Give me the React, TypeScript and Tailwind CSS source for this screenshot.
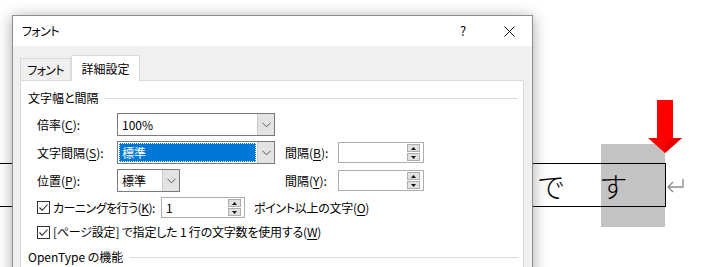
import React from "react";

const FONT = "font-['Noto_Sans_CJK_JP',sans-serif] [font-feature-settings:'palt']";

function U({ c }: { c: string }) {
  return <span className="underline underline-offset-2 decoration-1">{c}</span>;
}

function Chevron() {
  return (
    <svg width="9" height="6" viewBox="0 0 9 6">
      <polyline points="0.5,0.8 4.5,4.8 8.5,0.8" fill="none" stroke="#555" strokeWidth="1" />
    </svg>
  );
}

function Combo({ w, text, selected }: { w: string; text: string; selected?: boolean }) {
  return (
    <div className={`flex h-[23px] border border-[#7a7a7a] bg-white ${w}`}>
      <div className="flex-1 flex items-center p-[1px]">
        {selected ? (
          <div className="h-full w-full bg-[#0078d7] outline-1 outline-dotted outline-[#ffffff] -outline-offset-1 flex items-center pl-[3px] text-white">
            {text}
          </div>
        ) : (
          <span className="pl-[3px]">{text}</span>
        )}
      </div>
      <div className="w-[17px] bg-[#e3e3e3] border-l border-[#cccccc] flex items-center justify-center">
        <Chevron />
      </div>
    </div>
  );
}

function SpinBtn({ up }: { up?: boolean }) {
  return (
    <div className="h-[8px] w-[13px] bg-[#e1e1e1] border border-[#adadad] flex items-center justify-center">
      <svg width="5" height="3" viewBox="0 0 5 3">
        {up ? <polygon points="0,3 5,3 2.5,0" fill="#111" /> : <polygon points="0,0 5,0 2.5,3" fill="#111" />}
      </svg>
    </div>
  );
}

function Spin({ w, text }: { w: string; text?: string }) {
  return (
    <div className={`flex h-[21px] border border-[#adadad] bg-white ${w}`}>
      <div className="flex-1 flex items-center pl-[4px]">{text}</div>
      <div className="flex flex-col justify-center gap-[1px] pr-[3px]">
        <SpinBtn up />
        <SpinBtn />
      </div>
    </div>
  );
}

function Check() {
  return (
    <div className="w-[13px] h-[13px] border border-[#333333] bg-white flex items-center justify-center shrink-0">
      <svg width="11" height="11" viewBox="0 0 11 11">
        <polyline points="1.5,5.5 4.2,8.3 9.5,2.5" fill="none" stroke="#222" strokeWidth="1.1" />
      </svg>
    </div>
  );
}

export default function App() {
  return (
    <div className={`relative w-[716px] h-[267px] bg-white overflow-hidden text-[12px] leading-[16px] text-black ${FONT}`}>
      {/* Document behind the dialog */}
      <div className="absolute left-[601px] top-[144px] w-[64px] h-[83px] bg-[#c3c3c3]" />
      <div className="absolute left-[-20px] top-[163px] w-[686px] h-[44px] border border-black" />
      <span className="absolute left-[538px] top-[171px] text-[28px] leading-[30px] font-light">で</span>
      <span className="absolute left-[601px] top-[171px] text-[28px] leading-[30px] font-light">す</span>
      <svg className="absolute left-[666px] top-[177px]" width="20" height="18" viewBox="0 0 20 18">
        <polyline points="17,2 17,10 2,10" fill="none" stroke="#8a8a8a" strokeWidth="1.3" />
        <polyline points="7,5 2,10 7,15" fill="none" stroke="#8a8a8a" strokeWidth="1.3" />
      </svg>
      <svg className="absolute left-[647px] top-[99px]" width="36" height="56" viewBox="0 0 36 56">
        <polygon points="10,1 26,1 26,39 35,39 18,54 1,39 10,39" fill="#ff0000" />
        <polygon points="18,54 26,47 35,39 26,39 18,47" fill="#d40000" opacity="0.6" />
      </svg>

      {/* Dialog */}
      <div className="absolute left-[12px] top-[15px] w-[521px] h-[290px] border border-[#8e8e8e] bg-[#f0f0f0] shadow-[0_2px_14px_rgba(0,0,0,0.35)] flex flex-col">
        <div className="h-[30px] bg-white flex items-center shrink-0">
          <span className="pl-[9px] tracking-[-0.6px]">フォント</span>
          <div className="ml-auto w-[46px] h-full flex items-center justify-center text-[13px]">?</div>
          <div className="w-[46px] h-full flex items-center justify-center">
            <svg width="11" height="11" viewBox="0 0 11 11">
              <line x1="0.5" y1="0.5" x2="10.5" y2="10.5" stroke="#111" strokeWidth="1" />
              <line x1="10.5" y1="0.5" x2="0.5" y2="10.5" stroke="#111" strokeWidth="1" />
            </svg>
          </div>
        </div>

        <div className="flex items-end pl-[7px] pt-[8px] h-[34px] shrink-0">
          <div className="w-[51px] h-[22px] border border-b-0 border-[#d9d9d9] flex items-center justify-center tracking-[-0.6px]">フォント</div>
          <div className="relative z-10 -mb-px w-[69px] h-[26px] bg-white border border-b-0 border-[#d9d9d9] flex items-center justify-center">
            詳細設定
          </div>
        </div>

        <div className="ml-[7px] w-[504px] flex-1 bg-white border border-[#d9d9d9] flex flex-col pt-[9px]">
          <div className="flex items-center pl-[7px] pr-[5px] h-[16px]">
            <span>文字幅と間隔</span>
            <div className="flex-1 h-px bg-[#dcdcdc] ml-[6px]" />
          </div>

          <div className="flex items-center h-[23px] mt-[7px] pl-[16px]">
            <div className="w-[80px]">倍率(<U c="C" />):</div>
            <Combo w="w-[158px]" text="100%" />
          </div>

          <div className="flex items-center h-[23px] mt-[5px] pl-[16px]">
            <div className="w-[80px]">文字間隔(<U c="S" />):</div>
            <div className="w-[168px]">
              <Combo w="w-[158px]" text="標準" selected />
            </div>
            <div className="w-[53px]">間隔(<U c="B" />):</div>
            <Spin w="w-[86px]" />
          </div>

          <div className="flex items-center h-[23px] mt-[5px] pl-[16px]">
            <div className="w-[80px]">位置(<U c="P" />):</div>
            <div className="w-[168px]">
              <Combo w="w-[63px]" text="標準" />
            </div>
            <div className="w-[53px]">間隔(<U c="Y" />):</div>
            <Spin w="w-[86px]" />
          </div>

          <div className="flex items-center h-[21px] mt-[5px] pl-[16px]">
            <Check />
            <div className="w-[111px] pl-[3px] tracking-[-0.5px]">カーニングを行う(<U c="K" />):</div>
            <Spin w="w-[84px]" text="1" />
            <div className="pl-[9px] tracking-[-0.3px]">ポイント以上の文字(<U c="O" />)</div>
          </div>

          <div className="flex items-center h-[16px] mt-[6px] pl-[16px]">
            <Check />
            <div className="pl-[3px] tracking-[-0.2px]">[ページ設定] で指定した 1 行の文字数を使用する(<U c="W" />)</div>
          </div>

          <div className="flex items-center pl-[7px] pr-[5px] h-[16px] mt-[9px]">
            <span>OpenType の機能</span>
            <div className="flex-1 h-px bg-[#dcdcdc] ml-[6px]" />
          </div>
        </div>
      </div>
    </div>
  );
}
